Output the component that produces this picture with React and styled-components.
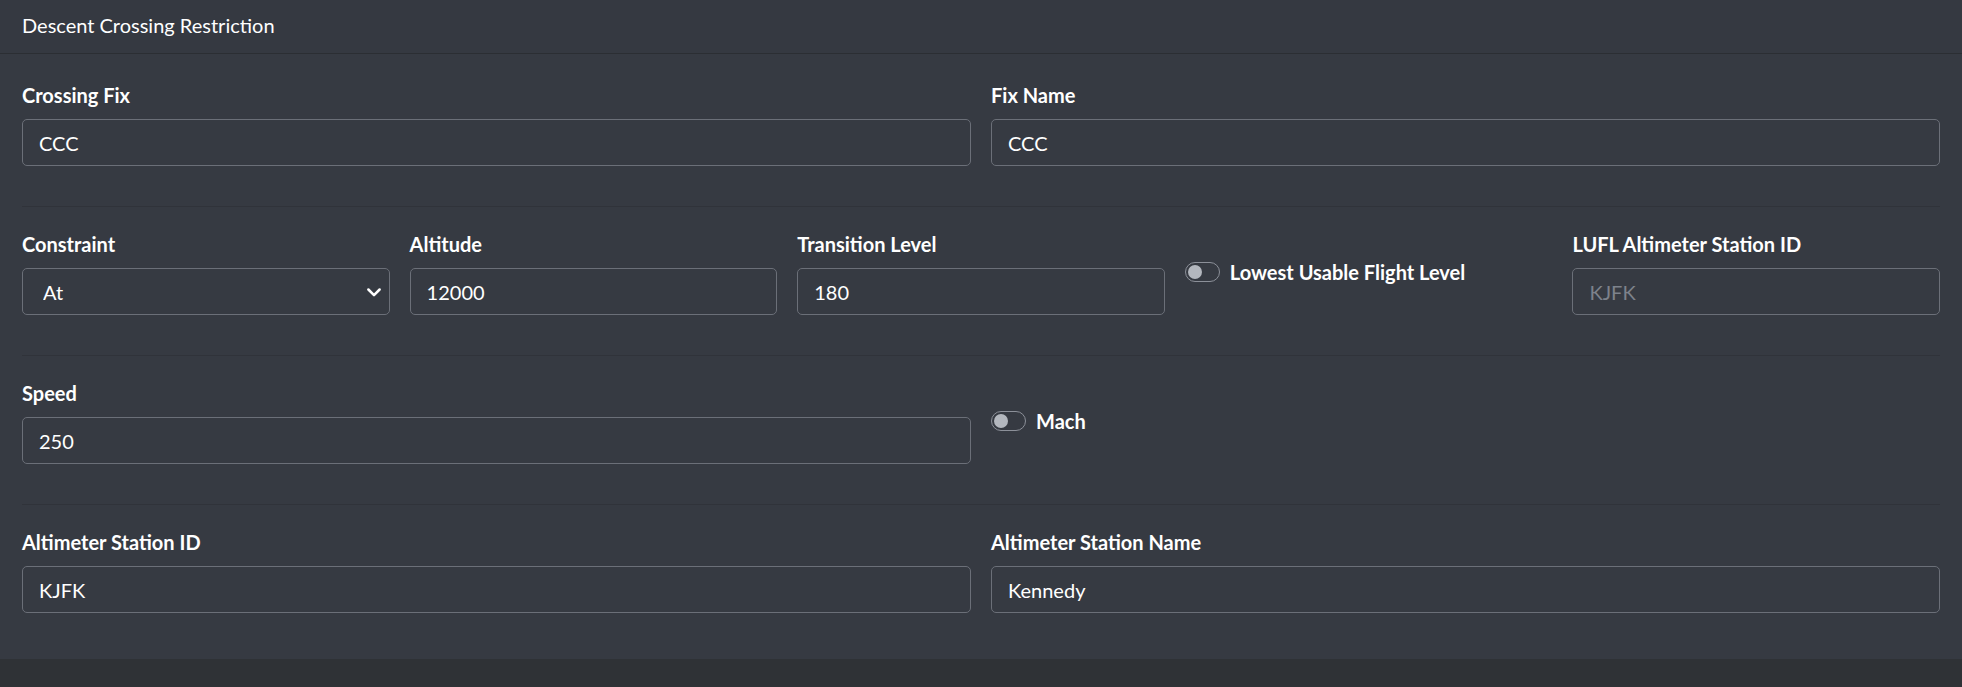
import styled, { createGlobalStyle } from 'styled-components';

const GlobalStyle = createGlobalStyle`
  html, body {
    margin: 0;
    padding: 0;
    background: #2f3236;
  }
  body {
    font-family: Lato, "Noto Sans", sans-serif;
    color: #fff;
  }
  * {
    box-sizing: border-box;
  }
`;

const Card = styled.section`
  background: #363a42;
  width: 100%;
`;

const CardHeader = styled.header`
  height: 54px;
  padding: 0 22px 4px;
  display: flex;
  align-items: center;
  font-size: 20px;
  border-bottom: 1px solid #2b2e33;
  background: #353941;
`;

const CardBody = styled.div`
  padding: 26px 22px 46px;
`;

const Row = styled.div`
  display: grid;
  grid-template-columns: repeat(${p => p.$cols}, 1fr);
  column-gap: 20px;
`;

const Divider = styled.hr`
  margin: 40px 0 22px;
  border: 0;
  border-top: 1px solid #30333a;
`;

const Field = styled.div`
  display: flex;
  flex-direction: column;
`;

const Label = styled.label`
  font-size: 20px;
  font-weight: 700;
  line-height: 30px;
  margin-bottom: 9px;
`;

const Input = styled.input`
  height: 47px;
  width: 100%;
  background: transparent;
  border: 1px solid #6b6f78;
  border-radius: 5px;
  color: #fff;
  font-family: inherit;
  font-size: 20px;
  padding: 0 16px;
  outline: none;

  &::placeholder {
    color: #7d828b;
  }
`;

const SelectWrap = styled.div`
  position: relative;
`;

const Select = styled.select`
  appearance: none;
  height: 47px;
  width: 100%;
  background: transparent;
  border: 1px solid #6b6f78;
  border-radius: 5px;
  color: #fff;
  font-family: inherit;
  font-size: 20px;
  padding: 0 40px 0 20px;
  outline: none;

  option {
    background: #363a42;
  }
`;

const Chevron = styled.svg`
  position: absolute;
  right: 6px;
  top: 50%;
  transform: translateY(-50%);
  pointer-events: none;
`;

const SwitchField = styled.label`
  display: flex;
  align-items: center;
  gap: 10px;
  padding-top: 32px;
  align-self: start;
  font-size: 20px;
  font-weight: 700;
  line-height: 22px;
`;

const Switch = styled.span`
  flex: none;
  width: 35px;
  height: 20px;
  border: 1.5px solid #8c9099;
  border-radius: 10px;
  display: flex;
  align-items: center;
  padding-left: 2px;

  &::before {
    content: '';
    width: 14px;
    height: 14px;
    border-radius: 50%;
    background: #b3b7be;
  }
`;

const Toggle = ({ label }) => (
  <SwitchField>
    <Switch />
    <span>{label}</span>
  </SwitchField>
);

const App = () => (
  <>
    <GlobalStyle />
    <Card>
      <CardHeader>Descent Crossing Restriction</CardHeader>
      <CardBody>
        <Row $cols={2}>
          <Field>
            <Label>Crossing Fix</Label>
            <Input defaultValue="CCC" />
          </Field>
          <Field>
            <Label>Fix Name</Label>
            <Input defaultValue="CCC" />
          </Field>
        </Row>
        <Divider />
        <Row $cols={5}>
          <Field>
            <Label>Constraint</Label>
            <SelectWrap>
              <Select defaultValue="At">
                <option>At</option>
                <option>At or Above</option>
                <option>At or Below</option>
              </Select>
              <Chevron width="20" height="20" viewBox="0 0 16 16" fill="none">
                <path d="M3.5 6l4.5 4.5L12.5 6" stroke="#fff" strokeWidth="2" strokeLinecap="round" strokeLinejoin="round" />
              </Chevron>
            </SelectWrap>
          </Field>
          <Field>
            <Label>Altitude</Label>
            <Input defaultValue="12000" />
          </Field>
          <Field>
            <Label>Transition Level</Label>
            <Input defaultValue="180" />
          </Field>
          <Toggle label="Lowest Usable Flight Level" />
          <Field>
            <Label>LUFL Altimeter Station ID</Label>
            <Input placeholder="KJFK" />
          </Field>
        </Row>
        <Divider />
        <Row $cols={2}>
          <Field>
            <Label>Speed</Label>
            <Input defaultValue="250" />
          </Field>
          <Toggle label="Mach" />
        </Row>
        <Divider />
        <Row $cols={2}>
          <Field>
            <Label>Altimeter Station ID</Label>
            <Input defaultValue="KJFK" />
          </Field>
          <Field>
            <Label>Altimeter Station Name</Label>
            <Input defaultValue="Kennedy" />
          </Field>
        </Row>
      </CardBody>
    </Card>
  </>
);

export default App;
